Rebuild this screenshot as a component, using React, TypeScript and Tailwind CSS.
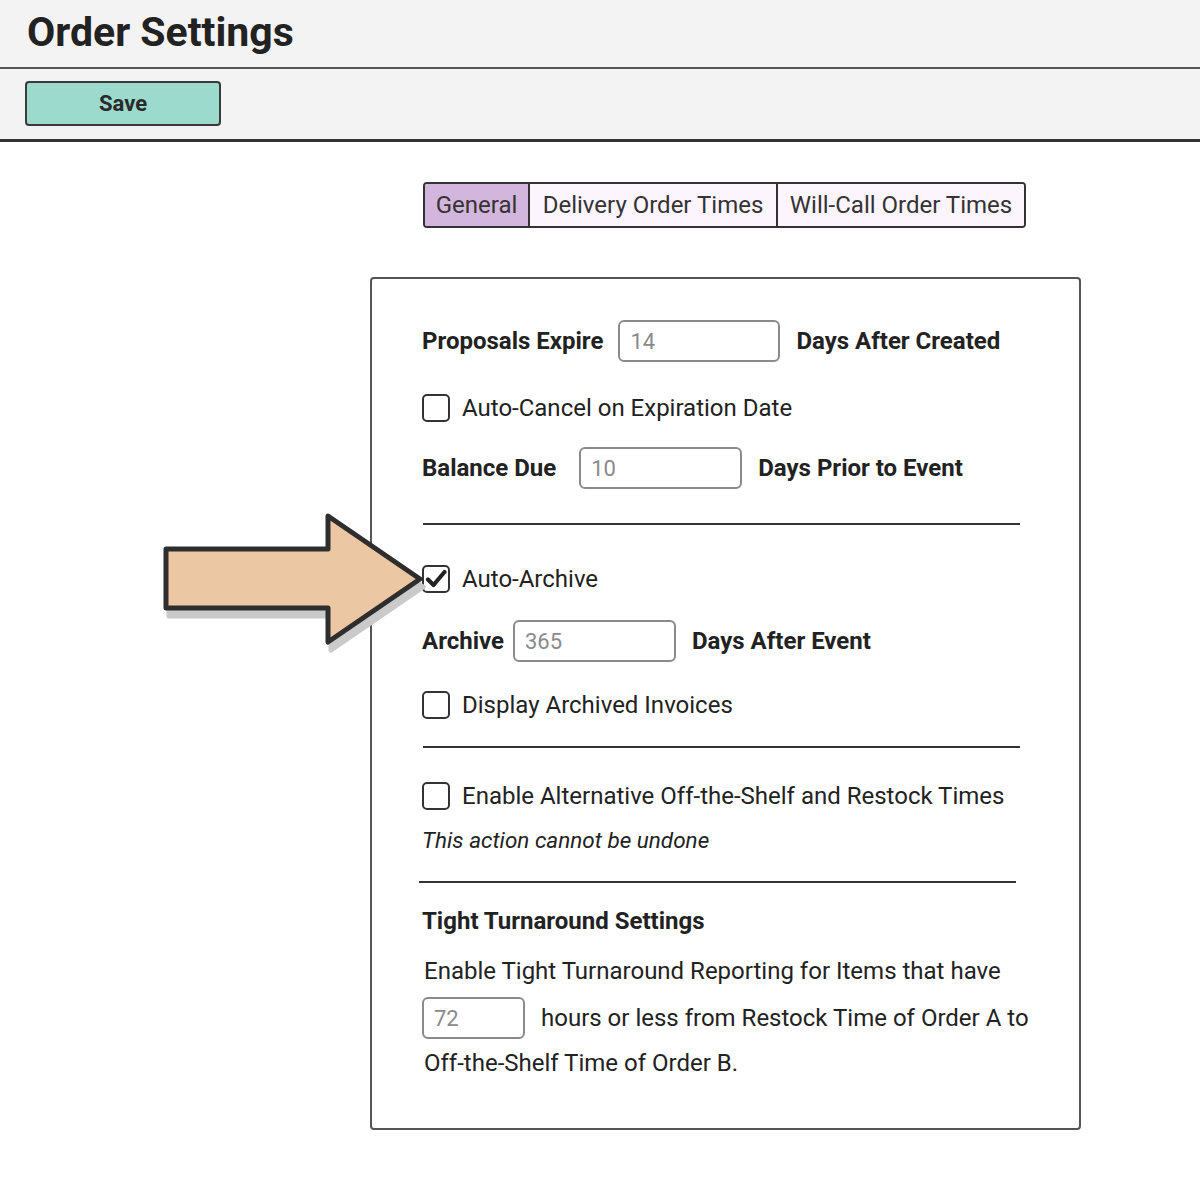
import React from 'react';

const font = { fontFamily: 'Roboto, "Liberation Sans", sans-serif' };

function NumInput({ value, width }: { value: string; width: string }) {
  return (
    <div
      className={`h-[42px] ${width} flex items-center rounded-[6px] border-2 border-[#8a8a8a] bg-white pl-[10px] text-[22px] text-[#8a8a8a]`}
    >
      {value}
    </div>
  );
}

function Checkbox({ checked = false }: { checked?: boolean }) {
  return (
    <div className="w-[28px] h-[28px] shrink-0 rounded-[5px] border-2 border-[#333] bg-white flex items-center justify-center">
      {checked && (
        <svg width="22" height="22" viewBox="0 0 22 22">
          <path d="M3 11.5 L8.5 17 L19.5 4" fill="none" stroke="#222" strokeWidth="4.2" strokeLinecap="round" strokeLinejoin="round" />
        </svg>
      )}
    </div>
  );
}

function Arrow() {
  return (
    <svg
      className="absolute left-[155px] top-[505px]"
      width="280"
      height="150"
      viewBox="155 505 280 150"
    >
      <polygon
        points="166,549 328,549 328,516 420,579 328,642 328,608 166,608"
        fill="#cacaca"
        stroke="#cacaca"
        strokeWidth="5"
        strokeLinejoin="round"
        transform="translate(3 8)"
      />
      <polygon
        points="166,549 328,549 328,516 420,579 328,642 328,608 166,608"
        fill="#ecc7a3"
        stroke="#2e2e2e"
        strokeWidth="5"
        strokeLinejoin="round"
      />
    </svg>
  );
}

export default function App() {
  return (
    <div className="relative w-[1200px] h-[1188px] bg-white text-[#222]" style={font}>
      {/* Header */}
      <header className="h-[67px] bg-[#f3f3f3] flex items-center pl-[27px]">
        <h1 className="text-[41px] font-bold leading-none -mt-[2px]">Order Settings</h1>
      </header>
      <div className="h-[2px] bg-[#555]" />
      <div className="h-[70px] bg-[#f3f3f3] pt-[12px] pl-[25px]">
        <button className="w-[196px] h-[45px] rounded-[4px] border-2 border-[#3a3a3a] bg-[#9bdacd] text-[22px] font-bold text-[#2a2a2a]">
          Save
        </button>
      </div>
      <div className="h-[3px] bg-[#333]" />

      {/* Main */}
      <main className="pl-[370px]">
        <div className="mt-[40px] ml-[53px] flex w-fit h-[46px] rounded-[4px] border-2 border-[#333] overflow-hidden text-[24px] text-[#333]">
          <div className="w-[105px] justify-center flex items-center bg-[#d3b6dd] border-r-2 border-[#333]">General</div>
          <div className="w-[248px] justify-center flex items-center bg-[#fdf5fd] border-r-2 border-[#333]">Delivery Order Times</div>
          <div className="w-[246px] justify-center flex items-center bg-[#fdf5fd]">Will-Call Order Times</div>
        </div>

        <div className="mt-[49px] w-[711px] rounded-[4px] border-2 border-[#555] pt-[41px] pb-[51px] pl-[50px] text-[24px]">
          <div className="h-[42px] flex items-center">
            <span className="font-bold mr-[15px]">Proposals Expire</span>
            <NumInput value="14" width="w-[162px]" />
            <span className="font-bold ml-[16px]">Days After Created</span>
          </div>

          <div className="mt-[32px] h-[28px] flex items-center gap-[12px]">
            <Checkbox />
            <span>Auto-Cancel on Expiration Date</span>
          </div>

          <div className="mt-[25px] h-[42px] flex items-center">
            <span className="font-bold mr-[23px]">Balance Due</span>
            <NumInput value="10" width="w-[163px]" />
            <span className="font-bold ml-[16px]">Days Prior to Event</span>
          </div>

          <div className="mt-[34px] ml-[1px] w-[597px] h-[2px] bg-[#333]" />

          <div className="mt-[40px] h-[28px] flex items-center gap-[12px]">
            <Checkbox checked />
            <span>Auto-Archive</span>
          </div>

          <div className="mt-[27px] h-[42px] flex items-center">
            <span className="font-bold mr-[9px]">Archive</span>
            <NumInput value="365" width="w-[163px]" />
            <span className="font-bold ml-[16px]">Days After Event</span>
          </div>

          <div className="mt-[29px] h-[28px] flex items-center gap-[12px]">
            <Checkbox />
            <span>Display Archived Invoices</span>
          </div>

          <div className="mt-[27px] ml-[1px] w-[597px] h-[2px] bg-[#333]" />

          <div className="mt-[34px] h-[28px] flex items-center gap-[12px]">
            <Checkbox />
            <span>Enable Alternative Off-the-Shelf and Restock Times</span>
          </div>

          <div className="mt-[17px] h-[28px] flex items-center italic text-[22.5px]">This action cannot be undone</div>

          <div className="mt-[26px] -ml-[3px] w-[597px] h-[2px] bg-[#333]" />

          <div className="mt-[24px] h-[28px] flex items-center font-bold text-[24px]">Tight Turnaround Settings</div>

          <div className="mt-[22px] h-[28px] flex items-center pl-[2px] text-[24px]">
            Enable Tight Turnaround Reporting for Items that have
          </div>

          <div className="mt-[12px] h-[42px] flex items-center text-[24px]">
            <NumInput value="72" width="w-[103px]" />
            <span className="ml-[16px]">hours or less from Restock Time of Order A to</span>
          </div>

          <div className="mt-[10px] h-[28px] flex items-center pl-[2px] text-[24px]">Off-the-Shelf Time of Order B.</div>
        </div>
      </main>

      <Arrow />
    </div>
  );
}
